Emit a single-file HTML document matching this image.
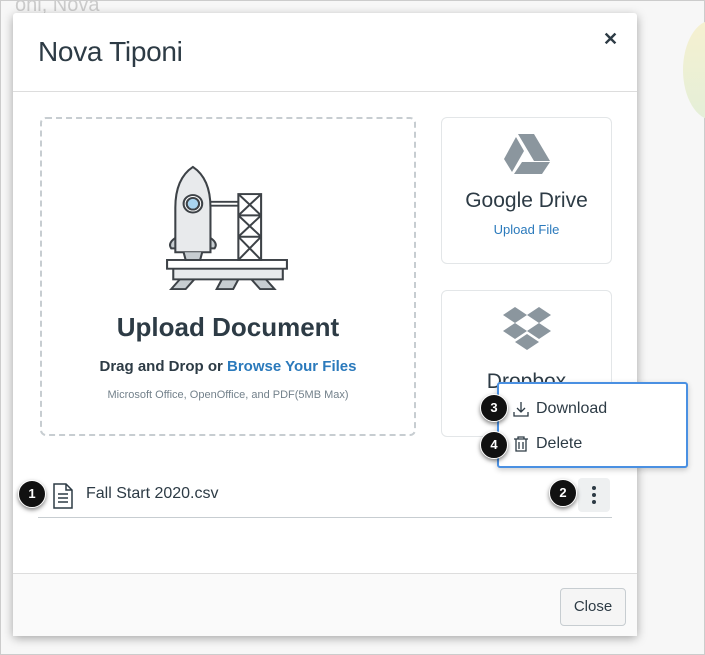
<!DOCTYPE html><html><head><style>
body{margin:0;width:705px;height:655px;background:#f4f4f4;font-family:"Liberation Sans",sans-serif;position:relative;overflow:hidden;color:#2d3b45}
.frame{position:absolute;left:0;top:0;width:703px;height:653px;border:1px solid #ccc;background:#f7f7f7}
.bgt{position:absolute;color:#ccc;font-size:13px}
.modal{position:absolute;left:13px;top:13px;width:624px;height:622px;background:#fff;border-radius:3px;box-shadow:0 3px 10px rgba(0,0,0,.35)}
.hd{position:absolute;left:0;top:0;width:100%;height:78px;border-bottom:1px solid #ddd}
.hd h1{position:absolute;left:25px;top:23px;margin:0;font-weight:normal;font-size:28px;letter-spacing:-.3px}
.x{position:absolute;left:590px;top:16px;font-size:18px;font-weight:bold}
.dz{position:absolute;left:27px;top:104px;width:372px;height:315px;border:2px dashed #c7cdd1;border-radius:6px;text-align:center}
.card{position:absolute;left:428px;width:169px;border:1px solid #e3e6e8;border-radius:6px;text-align:center}
.foot{position:absolute;left:0;top:560px;width:100%;height:62px;border-top:1px solid #ddd;background:#fafafa}
.btn{position:absolute;right:11px;top:14px;width:64px;height:36px;border:1px solid #c7cdd1;border-radius:4px;background:#f5f5f5;font-size:15px;line-height:36px;text-align:center}
.badge{position:absolute;width:26px;height:26px;border-radius:50%;background:#111;color:#fff;font-weight:bold;font-size:13px;text-align:center;line-height:26px;box-shadow:0 2px 4px rgba(0,0,0,.5);border:1px solid #fff}
</style></head><body>
<div class="frame"></div>
<div class="bgt" style="left:15px;top:-6px;font-size:20px">oni, Nova</div>
<div style="position:absolute;left:683px;top:20px;width:60px;height:100px;border-radius:50%;background:linear-gradient(#f6f0d0,#e4efd8)"></div>
<div class="modal">
<div class="hd"><h1>Nova Tiponi</h1><div class="x">✕</div></div>
<div class="dz">
<svg width="124" height="126" viewBox="4 6 120 130" preserveAspectRatio="none" style="position:absolute;left:123px;top:46px" fill="none" stroke="#3d4247" stroke-width="2">
<path d="M10 134 L20 122 L34 122 L24 134Z M54 134 L60 122 L76 122 L70 134Z M96 134 L86 122 L100 122 L110 134Z" fill="#c7cdd1"/>
<rect x="12" y="112" width="106" height="12" fill="#e8eaec"/>
<rect x="6" y="104" width="116" height="9" fill="#fff"/>
<path d="M16 80 Q6 86 10 92 L26 92Z M46 80 Q56 86 52 92 L36 92Z" fill="#c7cdd1"/>
<path d="M31 8 Q14 20 14 50 L14 96 L48 96 L48 50 Q48 20 31 8Z" fill="#e8eaec"/>
<path d="M22 96 L24 104 L38 104 L40 96" fill="#c7cdd1"/>
<circle cx="31" cy="46" r="9" fill="#fff"/><circle cx="31" cy="46" r="6" fill="#a8d4f0"/>
<path d="M48 44 L75 44 M48 48 L75 48"/>
<rect x="75" y="36" width="22" height="68"/>
<path d="M75 36 L97 58 M97 36 L75 58 M75 58 L97 80 M97 58 L75 80 M75 80 L97 104 M97 80 L75 104 M75 58 H97 M75 80 H97"/>
</svg>
<div style="position:absolute;left:0;width:100%;top:193px;font-size:26px;font-weight:bold">Upload Document</div>
<div style="position:absolute;left:0;width:100%;top:239px;font-size:15px;font-weight:bold">Drag and Drop or <span style="color:#2b7abc">Browse Your Files</span></div>
<div style="position:absolute;left:0;width:100%;top:270px;font-size:11px;color:#73818b">Microsoft Office, OpenOffice, and PDF(5MB Max)</div>
</div>
<div class="card" style="top:104px;height:145px">
<svg width="48" height="42" viewBox="0 0 48 42" style="margin-top:16px"><path d="M15 0H31L47 27H31Z M13 3L21 17 9 38 1 25Z M11 40L19 28H47L39 40Z" fill="#8b969e"/></svg>
<div style="font-size:21px;margin-top:8px">Google Drive</div>
<div style="font-size:13px;color:#2b7abc;margin-top:9px">Upload File</div>
</div>
<div class="card" style="top:277px;height:145px;overflow:hidden">
<svg width="50" height="44" viewBox="0 0 50 44" style="margin-top:16px" fill="#8b969e"><path d="M13 0L25 8 13 16 1 8Z M37 0L49 8 37 16 25 8Z M13 16L25 24 13 32 1 24Z M37 16L49 24 37 32 25 24Z M25 27L37 35 25 43 13 35Z"/></svg>
<div style="font-size:21px;margin-top:14px">Dropbox</div>
</div>
<svg width="22" height="26" viewBox="0 0 22 26" style="position:absolute;left:39px;top:470px" fill="none" stroke="#2d3b45" stroke-width="1.5"><path d="M2 1H14L20 7V25H2Z M14 1V7H20 M6 11H16 M6 15H16 M6 19H16"/></svg>
<div style="position:absolute;left:73px;top:472px;font-size:16px">Fall Start 2020.csv</div>
<div style="position:absolute;left:25px;top:504px;width:574px;border-top:1px solid #c7cdd1"></div>
<div style="position:absolute;left:565px;top:465px;width:32px;height:34px;background:#eef0f1;border-radius:4px;text-align:center"><svg width="6" height="20" style="margin-top:7px"><circle cx="3" cy="3" r="2" fill="#2d3b45"/><circle cx="3" cy="10" r="2" fill="#2d3b45"/><circle cx="3" cy="17" r="2" fill="#2d3b45"/></svg></div>
<div class="foot"><div class="btn">Close</div></div>
</div>
<div style="position:absolute;left:497px;top:382px;width:187px;height:82px;border:2px solid #4a90e2;border-radius:3px;background:#fff;box-shadow:0 2px 6px rgba(0,0,0,.2)">
<svg width="16" height="16" viewBox="0 0 16 16" style="position:absolute;left:14px;top:17px" fill="none" stroke="#2d3b45" stroke-width="1.3"><path d="M8 1V11 M4 7L8 11 12 7 M1 11V15H15V11"/></svg>
<div style="position:absolute;left:37px;top:16px;font-size:16px">Download</div>
<svg width="16" height="16" viewBox="0 0 16 16" style="position:absolute;left:14px;top:52px" fill="none" stroke="#2d3b45" stroke-width="1.3"><path d="M1 3H15 M5 3V1H11V3 M3 3V15H13V3 M6 6V13 M10 6V13"/></svg>
<div style="position:absolute;left:37px;top:51px;font-size:16px">Delete</div>
</div>
<div class="badge" style="left:18px;top:480px">1</div>
<div class="badge" style="left:549px;top:479px">2</div>
<div class="badge" style="left:480px;top:394px">3</div>
<div class="badge" style="left:480px;top:431px">4</div>
</body></html>
